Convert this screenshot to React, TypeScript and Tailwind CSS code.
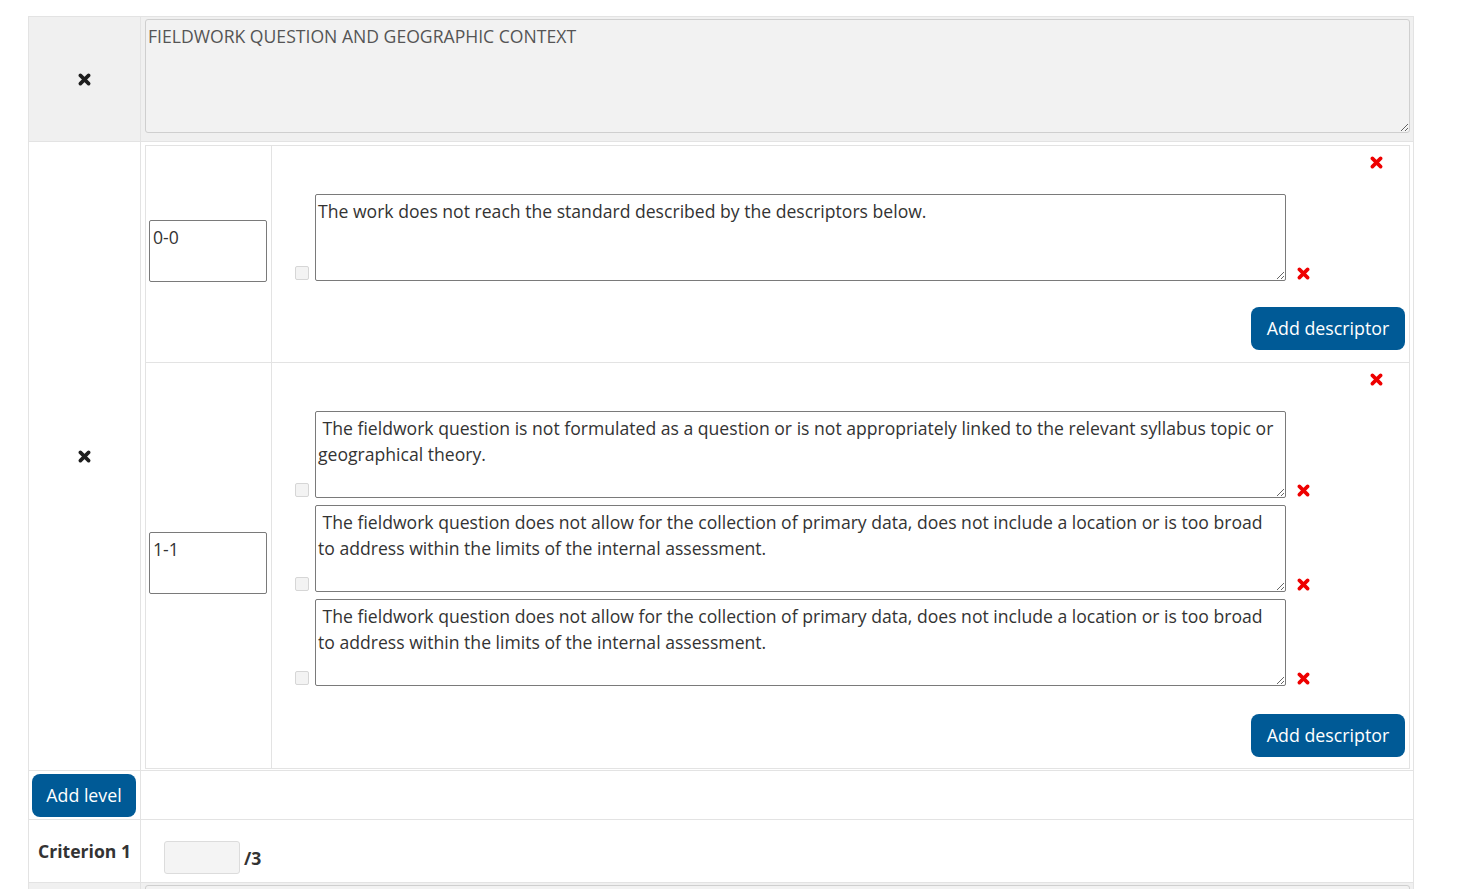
import React from "react";

const font = { fontFamily: '"Open Sans", "Liberation Sans", sans-serif' };

const Cross = ({ red = false }: { red?: boolean }) => (
  <svg width="13" height="13" viewBox="0 0 12 12" className="block shrink-0">
    <path
      d="M2.2 2.2 L9.8 9.8 M9.8 2.2 L2.2 9.8"
      stroke={red ? "#ee0000" : "#1e1e1e"}
      strokeWidth="3.3"
      strokeLinecap="round"
      fill="none"
    />
  </svg>
);

const BlueButton = ({ label, className = "" }: { label: string; className?: string }) => (
  <button
    className={
      "bg-[#005a96] text-white text-[17.8px] rounded-lg leading-none flex items-center justify-center " +
      className
    }
  >
    {label}
  </button>
);

const Descriptor = ({ text }: { text: string }) => (
  <div className="flex items-end">
    <input
      type="checkbox"
      disabled
      className="appearance-none w-[14px] h-[14px] border border-[#d6d6d6] bg-[#f3f3f3] rounded-[2px] mb-[1px]"
    />
    <textarea
      defaultValue={text}
      className="ml-[6px] w-[971px] h-[87px] border border-[#7a7a7a] rounded-[2px] px-[2px] pt-[3px] text-[17.6px] leading-[26px] text-[#333] bg-white outline-none"
    />
    <div className="ml-[11px] mb-[1px]">
      <Cross red />
    </div>
  </div>
);

const Level = ({
  range,
  descriptors,
  gap,
  mt,
  mb,
}: {
  range: string;
  descriptors: string[];
  gap: string;
  mt: string;
  mb: string;
}) => (
  <div className="flex border-b border-[#e3e3e3]">
    <div className="w-[126px] border-r border-[#e3e3e3] flex items-center pl-[3px]">
      <div className="w-[118px] h-[62px] mb-[6px] border border-[#7a7a7a] rounded-[2px] px-[3px] pt-[3px] text-[17.6px] leading-[26px] text-[#333]">
        {range}
      </div>
    </div>
    <div className="flex-1 flex flex-col">
      <div className="h-[48px] flex justify-end pt-[10px] pr-[26px]">
        <Cross red />
      </div>
      <div className={"flex flex-col pl-[23px] " + gap}>
        {descriptors.map((d, i) => (
          <Descriptor key={i} text={d} />
        ))}
      </div>
      <div className={"flex justify-end pr-[4px] " + mt + " " + mb}>
        <BlueButton label="Add descriptor" className="w-[154px] h-[43px]" />
      </div>
    </div>
  </div>
);

export default function App() {
  const broad =
    " The fieldwork question does not allow for the collection of primary data, does not include a location or is too broad to address within the limits of the internal assessment.";
  return (
    <div className="min-h-screen bg-white pt-[16px] pl-[28px]" style={font}>
      <div className="w-[1386px] border-t border-l border-r border-[#e3e3e3]">
        {/* heading row */}
        <div className="flex border-b border-[#e3e3e3] bg-[#f0f0f0] h-[125px]">
          <div className="w-[112px] border-r border-[#e3e3e3] flex items-center justify-center">
            <Cross />
          </div>
          <div className="flex-1 pl-[4px] pr-[3px] pt-[2px]">
            <textarea
              defaultValue="FIELDWORK QUESTION AND GEOGRAPHIC CONTEXT"
              className="block w-full h-[114px] bg-[#f2f2f2] border border-[#cfcfcf] rounded-[3px] px-[2px] pt-[3px] text-[17.6px] leading-[26px] text-[#555] outline-none"
            />
          </div>
        </div>

        {/* levels row */}
        <div className="flex border-b border-[#e3e3e3]">
          <div className="w-[112px] border-r border-[#e3e3e3] flex items-center justify-center">
            <Cross />
          </div>
          <div className="flex-1 pl-[4px] pr-[3px] pt-[3px] pb-[1px]">
            <div className="border-t border-l border-r border-[#e3e3e3]">
              <Level
                range="0-0"
                gap="gap-[8px]"
                mt="mt-[26px]"
                mb="mb-[12px]"
                descriptors={["The work does not reach the standard described by the descriptors below."]}
              />
              <Level
                range="1-1"
                gap="gap-[7px]"
                mt="mt-[28px]"
                mb="mb-[11px]"
                descriptors={[
                  " The fieldwork question is not formulated as a question or is not appropriately linked to the relevant syllabus topic or geographical theory.",
                  broad,
                  broad,
                ]}
              />
            </div>
          </div>
        </div>

        {/* add level row */}
        <div className="flex border-b border-[#e3e3e3] h-[49px]">
          <div className="w-[112px] border-r border-[#e3e3e3] px-[3px] pt-[3px]">
            <BlueButton label="Add level" className="w-[104px] h-[43px]" />
          </div>
          <div className="flex-1" />
        </div>

        {/* criterion row */}
        <div className="flex border-b border-[#e3e3e3] h-[63px]">
          <div className="w-[112px] border-r border-[#e3e3e3] flex items-center pl-[9px]">
            <span className="text-[17.6px] font-bold text-[#333]">Criterion 1</span>
          </div>
          <div className="flex-1 flex items-center pl-[23px] pt-[12px]">
            <input
              type="text"
              className="w-[76px] h-[33px] bg-[#f4f4f4] border border-[#dcdcdc] rounded-[3px]"
            />
            <span className="ml-[4px] mt-[2px] text-[17.6px] font-bold text-[#333]">/3</span>
          </div>
        </div>

        {/* next heading row */}
        <div className="flex border-b border-[#e3e3e3] bg-[#f0f0f0] h-[125px]">
          <div className="w-[112px] border-r border-[#e3e3e3] flex items-center justify-center">
            <Cross />
          </div>
          <div className="flex-1 pl-[4px] pr-[3px] pt-[2px]">
            <textarea className="block w-full h-[114px] bg-[#f2f2f2] border border-[#cfcfcf] rounded-[3px] px-[2px] pt-[3px] text-[17.6px] leading-[26px] text-[#555] outline-none" />
          </div>
        </div>
      </div>
    </div>
  );
}
